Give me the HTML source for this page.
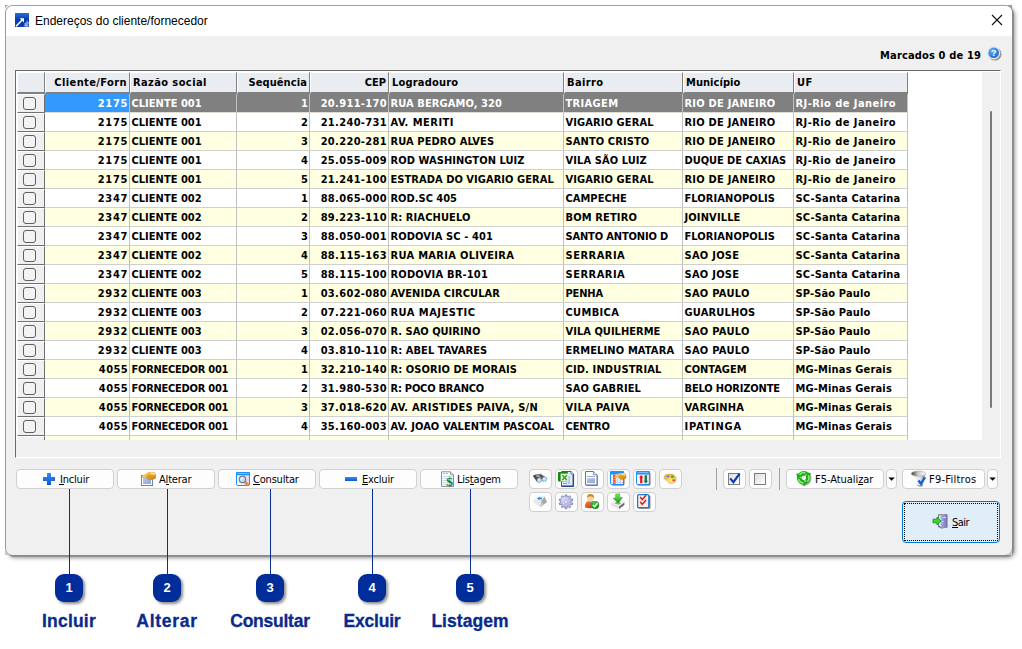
<!DOCTYPE html>
<html lang="pt-BR">
<head>
<meta charset="utf-8">
<title>Endereços do cliente/fornecedor</title>
<style>
html,body{margin:0;padding:0;background:#fff;}
body{width:1022px;height:649px;position:relative;overflow:hidden;font-family:"Liberation Sans",sans-serif;font-size:11px;color:#000;}
div,span,i,b,u{box-sizing:border-box;}
svg{position:absolute;overflow:visible;}
#win{position:absolute;left:5px;top:5px;width:1007px;height:550px;background:#f0f0f0;border-radius:8px 7px 7px 7px;border-left:1px solid #9c9c9c;border-top:1px solid #98a2b4;box-shadow:1px 1px 0 #8a8a8a,2px 2px 1px #8c8c8c,3px 3px 4px rgba(0,0,0,.38);overflow:hidden;}
.ear{position:absolute;width:7px;height:7px;background:#b9c2d0;}
#tbar{position:absolute;left:0;top:0;width:1008px;height:30px;background:#fff;}
#hfill{position:absolute;left:908px;top:72px;width:74px;height:22px;background:#fff;}
#ttl{position:absolute;left:35px;top:14px;font-size:12px;line-height:14px;white-space:nowrap;color:#000;}
#marc{font-family:"DejaVu Sans Condensed","DejaVu Sans","Liberation Sans",sans-serif;position:absolute;right:41px;top:49px;letter-spacing:.15px;font-size:11px;font-weight:bold;line-height:14px;white-space:nowrap;}
/* grid */
#grid{position:absolute;left:15px;top:70px;width:986px;height:388px;background:#f0f0f0;border-top:1px solid #696969;border-left:1px solid #696969;border-right:1px solid #fff;border-bottom:1px solid #fff;}
#gin{position:absolute;left:16px;top:71px;width:984px;height:386px;border-top:1px solid #fff;border-left:1px solid #fff;}
#data{position:absolute;left:17px;top:94px;width:965px;height:346px;background:#fff;overflow:hidden;}
#hind{position:absolute;left:17px;top:72px;width:28px;height:22px;background:#e9edf1;border-top:1px solid #fff;border-left:1px solid #fff;border-right:1px solid #808080;border-bottom:2px solid #808080;}
.hc{font-family:"DejaVu Sans Condensed","DejaVu Sans","Liberation Sans",sans-serif;position:absolute;top:72px;height:22px;background:#e9edf1;border-top:1px solid #fff;border-left:1px solid #fff;border-right:1px solid #808080;border-bottom:2px solid #808080;font-weight:bold;font-size:11px;line-height:18px;white-space:nowrap;overflow:hidden;padding:1px 2px 0 2px;z-index:2;}
.r{text-align:right;}
.l{text-align:left;}
.row{position:absolute;left:0;width:891px;height:19px;}
.row .c{font-family:"DejaVu Sans Condensed","DejaVu Sans","Liberation Sans",sans-serif;position:absolute;top:0;height:19px;font-weight:bold;font-size:11px;line-height:17px;white-space:nowrap;overflow:hidden;padding:1px 1px 0 1px;border-bottom:1px solid #d0d0d0;border-right:1px solid #c0c0c0;}
.row .c.l{padding-left:1.5px;}
.row.yl .c{background:#ffffe1;}
.row.wh .c{background:#fff;}
.row.sel .c{background:#808080;color:#fff;border-bottom-color:#e0dcd4;}
.row.sel .c.first{background:#3399ff;}
.ind{position:absolute;left:17px;width:28px;height:19px;background:#f0f0f0;border-top:1px solid #fff;border-left:1px solid #fff;border-right:1px solid #707070;border-bottom:1px solid #707070;}
.ind i{position:absolute;left:5px;top:2px;width:13px;height:13px;border:1px solid #5f5f5f;border-radius:3px;background:#f3f3f3;}
#indmask{position:absolute;left:16px;top:440px;width:966px;height:17px;background:#f0f0f0;}
#vsb{position:absolute;left:982px;top:72px;width:18px;height:368px;background:#f0f0f0;}
#thumb{position:absolute;left:990px;top:111px;width:2px;height:297px;background:#7a7a7a;border-radius:1px;}
/* buttons */
.btn{position:absolute;top:469px;height:20px;background:#fdfdfd;border:1px solid #d0d0d0;border-radius:4px;font-size:11px;line-height:20px;white-space:nowrap;}
.btn span{position:absolute;top:0;}
u{text-decoration:none;border-bottom:1px solid #000;display:inline-block;line-height:8px;}
.sep{position:absolute;top:468px;width:1px;height:22px;background:#a0a0a0;}

#sair{position:absolute;left:902px;top:501px;width:98px;height:42px;background:#e0eef9;border:1px solid #0078d7;border-radius:4px;font-family:"DejaVu Sans Condensed","DejaVu Sans","Liberation Sans",sans-serif;font-size:11px;}
#focus{position:absolute;left:1px;top:1px;right:1px;bottom:1px;border:1px dotted #000;}
.btn{font-family:"DejaVu Sans Condensed","DejaVu Sans","Liberation Sans",sans-serif;letter-spacing:-.2px;}
.ln{position:absolute;top:489px;width:1px;height:86px;background:#0a2e96;}
.bdg{position:absolute;top:574px;width:28px;height:28px;border-radius:9px;background:#002d9a;color:#fff;font-weight:bold;font-size:13px;line-height:28px;text-align:center;box-shadow:2px 2px 3px rgba(0,0,0,.45);}
.lbl{-webkit-text-stroke:.3px #0a2a8c;position:absolute;top:610px;width:100px;text-align:center;font-weight:bold;font-size:17.5px;line-height:22px;color:#0a2a8c;white-space:nowrap;}
</style>
</head>
<body>

<div id="win">
<div id="tbar"></div>
</div>
<div class="ear" style="left:1005px;top:5px;background:radial-gradient(circle at 0 100%,rgba(0,0,0,0) 6.6px,#8f9cb4 7.4px)"></div>
<div class="ear" style="left:1005px;top:548px;background:radial-gradient(circle at 0 0,rgba(0,0,0,0) 6.6px,#c2cad6 7.4px)"></div>
<div class="ear" style="left:5px;top:548px;background:radial-gradient(circle at 100% 0,rgba(0,0,0,0) 6.6px,#c2c6cc 7.4px)"></div>
<div class="ear" style="left:5px;top:5px;width:5px;height:5px;background:radial-gradient(circle at 100% 100%,rgba(0,0,0,0) 4.6px,#a2a6ae 5.4px)"></div>
<div id="ttl">Endereços do cliente/fornecedor</div>
<div id="marc">Marcados 0 de 19</div>
<div id="grid"></div>
<div id="gin"></div>
<div id="vsb"></div>
<div id="hfill"></div>
<div id="thumb"></div>
<div id="hind"></div>
<div class="hc r" style="left:45px;width:85px;letter-spacing:0.4px">Cliente/Forn</div>
<div class="hc l" style="left:130px;width:107px;letter-spacing:0.4px">Razão social</div>
<div class="hc r" style="left:237px;width:73px;letter-spacing:0.1px">Sequência</div>
<div class="hc r" style="left:310px;width:79px;letter-spacing:0px">CEP</div>
<div class="hc l" style="left:389px;width:175px;letter-spacing:0.2px">Logradouro</div>
<div class="hc l" style="left:564px;width:119px;letter-spacing:0.4px">Bairro</div>
<div class="hc l" style="left:683px;width:111px;letter-spacing:0.05px">Município</div>
<div class="hc l" style="left:794px;width:114px;letter-spacing:0.4px">UF</div>
<div id="data">
<div class="row sel" style="top:0px">
<div class="c r first" style="left:28px;width:85px;letter-spacing:0.66px">2175</div>
<div class="c l" style="left:113px;width:107px;letter-spacing:0.02px">CLIENTE 001</div>
<div class="c r" style="left:220px;width:73px">1</div>
<div class="c r" style="left:293px;width:79px;letter-spacing:0.34px">20.911-170</div>
<div class="c l" style="left:372px;width:175px;letter-spacing:0.09px">RUA BERGAMO, 320</div>
<div class="c l" style="left:547px;width:119px;letter-spacing:0.35px">TRIAGEM</div>
<div class="c l" style="left:666px;width:111px;letter-spacing:0.23px">RIO DE JANEIRO</div>
<div class="c l" style="left:777px;width:114px;letter-spacing:0.44px">RJ-Rio de Janeiro</div>
</div>
<div class="row wh" style="top:19px">
<div class="c r" style="left:28px;width:85px;letter-spacing:0.66px">2175</div>
<div class="c l" style="left:113px;width:107px;letter-spacing:0.02px">CLIENTE 001</div>
<div class="c r" style="left:220px;width:73px">2</div>
<div class="c r" style="left:293px;width:79px;letter-spacing:0.34px">21.240-731</div>
<div class="c l" style="left:372px;width:175px;letter-spacing:0.48px">AV. MERITI</div>
<div class="c l" style="left:547px;width:119px;letter-spacing:0.1px">VIGARIO GERAL</div>
<div class="c l" style="left:666px;width:111px;letter-spacing:0.23px">RIO DE JANEIRO</div>
<div class="c l" style="left:777px;width:114px;letter-spacing:0.44px">RJ-Rio de Janeiro</div>
</div>
<div class="row yl" style="top:38px">
<div class="c r" style="left:28px;width:85px;letter-spacing:0.66px">2175</div>
<div class="c l" style="left:113px;width:107px;letter-spacing:0.02px">CLIENTE 001</div>
<div class="c r" style="left:220px;width:73px">3</div>
<div class="c r" style="left:293px;width:79px;letter-spacing:0.34px">20.220-281</div>
<div class="c l" style="left:372px;width:175px;letter-spacing:0.1px">RUA PEDRO ALVES</div>
<div class="c l" style="left:547px;width:119px;letter-spacing:0.11px">SANTO CRISTO</div>
<div class="c l" style="left:666px;width:111px;letter-spacing:0.23px">RIO DE JANEIRO</div>
<div class="c l" style="left:777px;width:114px;letter-spacing:0.44px">RJ-Rio de Janeiro</div>
</div>
<div class="row wh" style="top:57px">
<div class="c r" style="left:28px;width:85px;letter-spacing:0.66px">2175</div>
<div class="c l" style="left:113px;width:107px;letter-spacing:0.02px">CLIENTE 001</div>
<div class="c r" style="left:220px;width:73px">4</div>
<div class="c r" style="left:293px;width:79px;letter-spacing:0.34px">25.055-009</div>
<div class="c l" style="left:372px;width:175px;letter-spacing:0.07px">ROD WASHINGTON LUIZ</div>
<div class="c l" style="left:547px;width:119px;letter-spacing:0.09px">VILA SÃO LUIZ</div>
<div class="c l" style="left:666px;width:111px;letter-spacing:-0.05px">DUQUE DE CAXIAS</div>
<div class="c l" style="left:777px;width:114px;letter-spacing:0.44px">RJ-Rio de Janeiro</div>
</div>
<div class="row yl" style="top:76px">
<div class="c r" style="left:28px;width:85px;letter-spacing:0.66px">2175</div>
<div class="c l" style="left:113px;width:107px;letter-spacing:0.02px">CLIENTE 001</div>
<div class="c r" style="left:220px;width:73px">5</div>
<div class="c r" style="left:293px;width:79px;letter-spacing:0.34px">21.241-100</div>
<div class="c l" style="left:372px;width:175px;letter-spacing:0.05px">ESTRADA DO VIGARIO GERAL</div>
<div class="c l" style="left:547px;width:119px;letter-spacing:0.1px">VIGARIO GERAL</div>
<div class="c l" style="left:666px;width:111px;letter-spacing:0.23px">RIO DE JANEIRO</div>
<div class="c l" style="left:777px;width:114px;letter-spacing:0.44px">RJ-Rio de Janeiro</div>
</div>
<div class="row wh" style="top:95px">
<div class="c r" style="left:28px;width:85px;letter-spacing:0.66px">2347</div>
<div class="c l" style="left:113px;width:107px;letter-spacing:0.02px">CLIENTE 002</div>
<div class="c r" style="left:220px;width:73px">1</div>
<div class="c r" style="left:293px;width:79px;letter-spacing:0.34px">88.065-000</div>
<div class="c l" style="left:372px;width:175px">ROD.SC 405</div>
<div class="c l" style="left:547px;width:119px;letter-spacing:0.03px">CAMPECHE</div>
<div class="c l" style="left:666px;width:111px;letter-spacing:0.08px">FLORIANOPOLIS</div>
<div class="c l" style="left:777px;width:114px;letter-spacing:0.18px">SC-Santa Catarina</div>
</div>
<div class="row yl" style="top:114px">
<div class="c r" style="left:28px;width:85px;letter-spacing:0.66px">2347</div>
<div class="c l" style="left:113px;width:107px;letter-spacing:0.02px">CLIENTE 002</div>
<div class="c r" style="left:220px;width:73px">2</div>
<div class="c r" style="left:293px;width:79px;letter-spacing:0.34px">89.223-110</div>
<div class="c l" style="left:372px;width:175px;letter-spacing:0.11px">R: RIACHUELO</div>
<div class="c l" style="left:547px;width:119px;letter-spacing:0.14px">BOM RETIRO</div>
<div class="c l" style="left:666px;width:111px;letter-spacing:0.14px">JOINVILLE</div>
<div class="c l" style="left:777px;width:114px;letter-spacing:0.18px">SC-Santa Catarina</div>
</div>
<div class="row wh" style="top:133px">
<div class="c r" style="left:28px;width:85px;letter-spacing:0.66px">2347</div>
<div class="c l" style="left:113px;width:107px;letter-spacing:0.02px">CLIENTE 002</div>
<div class="c r" style="left:220px;width:73px">3</div>
<div class="c r" style="left:293px;width:79px;letter-spacing:0.34px">88.050-001</div>
<div class="c l" style="left:372px;width:175px;letter-spacing:0.1px">RODOVIA SC - 401</div>
<div class="c l" style="left:547px;width:119px;letter-spacing:-0.15px">SANTO ANTONIO D</div>
<div class="c l" style="left:666px;width:111px;letter-spacing:0.08px">FLORIANOPOLIS</div>
<div class="c l" style="left:777px;width:114px;letter-spacing:0.18px">SC-Santa Catarina</div>
</div>
<div class="row yl" style="top:152px">
<div class="c r" style="left:28px;width:85px;letter-spacing:0.66px">2347</div>
<div class="c l" style="left:113px;width:107px;letter-spacing:0.02px">CLIENTE 002</div>
<div class="c r" style="left:220px;width:73px">4</div>
<div class="c r" style="left:293px;width:79px;letter-spacing:0.34px">88.115-163</div>
<div class="c l" style="left:372px;width:175px;letter-spacing:0.31px">RUA MARIA OLIVEIRA</div>
<div class="c l" style="left:547px;width:119px;letter-spacing:0.5px">SERRARIA</div>
<div class="c l" style="left:666px;width:111px;letter-spacing:0.27px">SAO JOSE</div>
<div class="c l" style="left:777px;width:114px;letter-spacing:0.18px">SC-Santa Catarina</div>
</div>
<div class="row wh" style="top:171px">
<div class="c r" style="left:28px;width:85px;letter-spacing:0.66px">2347</div>
<div class="c l" style="left:113px;width:107px;letter-spacing:0.02px">CLIENTE 002</div>
<div class="c r" style="left:220px;width:73px">5</div>
<div class="c r" style="left:293px;width:79px;letter-spacing:0.34px">88.115-100</div>
<div class="c l" style="left:372px;width:175px;letter-spacing:0.2px">RODOVIA BR-101</div>
<div class="c l" style="left:547px;width:119px;letter-spacing:0.5px">SERRARIA</div>
<div class="c l" style="left:666px;width:111px;letter-spacing:0.27px">SAO JOSE</div>
<div class="c l" style="left:777px;width:114px;letter-spacing:0.18px">SC-Santa Catarina</div>
</div>
<div class="row yl" style="top:190px">
<div class="c r" style="left:28px;width:85px;letter-spacing:0.66px">2932</div>
<div class="c l" style="left:113px;width:107px;letter-spacing:0.02px">CLIENTE 003</div>
<div class="c r" style="left:220px;width:73px">1</div>
<div class="c r" style="left:293px;width:79px;letter-spacing:0.34px">03.602-080</div>
<div class="c l" style="left:372px;width:175px;letter-spacing:0.09px">AVENIDA CIRCULAR</div>
<div class="c l" style="left:547px;width:119px;letter-spacing:-0.17px">PENHA</div>
<div class="c l" style="left:666px;width:111px;letter-spacing:0.28px">SAO PAULO</div>
<div class="c l" style="left:777px;width:114px;letter-spacing:0.14px">SP-São Paulo</div>
</div>
<div class="row wh" style="top:209px">
<div class="c r" style="left:28px;width:85px;letter-spacing:0.66px">2932</div>
<div class="c l" style="left:113px;width:107px;letter-spacing:0.02px">CLIENTE 003</div>
<div class="c r" style="left:220px;width:73px">2</div>
<div class="c r" style="left:293px;width:79px;letter-spacing:0.34px">07.221-060</div>
<div class="c l" style="left:372px;width:175px;letter-spacing:0.48px">RUA MAJESTIC</div>
<div class="c l" style="left:547px;width:119px;letter-spacing:0.35px">CUMBICA</div>
<div class="c l" style="left:666px;width:111px;letter-spacing:0.18px">GUARULHOS</div>
<div class="c l" style="left:777px;width:114px;letter-spacing:0.14px">SP-São Paulo</div>
</div>
<div class="row yl" style="top:228px">
<div class="c r" style="left:28px;width:85px;letter-spacing:0.66px">2932</div>
<div class="c l" style="left:113px;width:107px;letter-spacing:0.02px">CLIENTE 003</div>
<div class="c r" style="left:220px;width:73px">3</div>
<div class="c r" style="left:293px;width:79px;letter-spacing:0.34px">02.056-070</div>
<div class="c l" style="left:372px;width:175px">R. SAO QUIRINO</div>
<div class="c l" style="left:547px;width:119px;letter-spacing:0.03px">VILA QUILHERME</div>
<div class="c l" style="left:666px;width:111px;letter-spacing:0.28px">SAO PAULO</div>
<div class="c l" style="left:777px;width:114px;letter-spacing:0.14px">SP-São Paulo</div>
</div>
<div class="row wh" style="top:247px">
<div class="c r" style="left:28px;width:85px;letter-spacing:0.66px">2932</div>
<div class="c l" style="left:113px;width:107px;letter-spacing:0.02px">CLIENTE 003</div>
<div class="c r" style="left:220px;width:73px">4</div>
<div class="c r" style="left:293px;width:79px;letter-spacing:0.34px">03.810-110</div>
<div class="c l" style="left:372px;width:175px;letter-spacing:0.08px">R: ABEL TAVARES</div>
<div class="c l" style="left:547px;width:119px;letter-spacing:0.14px">ERMELINO MATARA</div>
<div class="c l" style="left:666px;width:111px;letter-spacing:0.28px">SAO PAULO</div>
<div class="c l" style="left:777px;width:114px;letter-spacing:0.14px">SP-São Paulo</div>
</div>
<div class="row yl" style="top:266px">
<div class="c r" style="left:28px;width:85px;letter-spacing:0.4px">4055</div>
<div class="c l" style="left:113px;width:107px;letter-spacing:-0.25px">FORNECEDOR 001</div>
<div class="c r" style="left:220px;width:73px">1</div>
<div class="c r" style="left:293px;width:79px;letter-spacing:0.34px">32.210-140</div>
<div class="c l" style="left:372px;width:175px;letter-spacing:0.08px">R: OSORIO DE MORAIS</div>
<div class="c l" style="left:547px;width:119px;letter-spacing:0.15px">CID. INDUSTRIAL</div>
<div class="c l" style="left:666px;width:111px;letter-spacing:-0.03px">CONTAGEM</div>
<div class="c l" style="left:777px;width:114px;letter-spacing:0.16px">MG-Minas Gerais</div>
</div>
<div class="row wh" style="top:285px">
<div class="c r" style="left:28px;width:85px;letter-spacing:0.4px">4055</div>
<div class="c l" style="left:113px;width:107px;letter-spacing:-0.25px">FORNECEDOR 001</div>
<div class="c r" style="left:220px;width:73px">2</div>
<div class="c r" style="left:293px;width:79px;letter-spacing:0.34px">31.980-530</div>
<div class="c l" style="left:372px;width:175px;letter-spacing:-0.22px">R: POCO BRANCO</div>
<div class="c l" style="left:547px;width:119px;letter-spacing:0.1px">SAO GABRIEL</div>
<div class="c l" style="left:666px;width:111px;letter-spacing:-0.15px">BELO HORIZONTE</div>
<div class="c l" style="left:777px;width:114px;letter-spacing:0.16px">MG-Minas Gerais</div>
</div>
<div class="row yl" style="top:304px">
<div class="c r" style="left:28px;width:85px;letter-spacing:0.4px">4055</div>
<div class="c l" style="left:113px;width:107px;letter-spacing:-0.25px">FORNECEDOR 001</div>
<div class="c r" style="left:220px;width:73px">3</div>
<div class="c r" style="left:293px;width:79px;letter-spacing:0.34px">37.018-620</div>
<div class="c l" style="left:372px;width:175px;letter-spacing:0.27px">AV. ARISTIDES PAIVA, S/N</div>
<div class="c l" style="left:547px;width:119px;letter-spacing:0.35px">VILA PAIVA</div>
<div class="c l" style="left:666px;width:111px;letter-spacing:0.17px">VARGINHA</div>
<div class="c l" style="left:777px;width:114px;letter-spacing:0.16px">MG-Minas Gerais</div>
</div>
<div class="row wh" style="top:323px">
<div class="c r" style="left:28px;width:85px;letter-spacing:0.4px">4055</div>
<div class="c l" style="left:113px;width:107px;letter-spacing:-0.25px">FORNECEDOR 001</div>
<div class="c r" style="left:220px;width:73px">4</div>
<div class="c r" style="left:293px;width:79px;letter-spacing:0.34px">35.160-003</div>
<div class="c l" style="left:372px;width:175px;letter-spacing:0.08px">AV. JOAO VALENTIM PASCOAL</div>
<div class="c l" style="left:547px;width:119px;letter-spacing:-0.12px">CENTRO</div>
<div class="c l" style="left:666px;width:111px;letter-spacing:0.78px">IPATINGA</div>
<div class="c l" style="left:777px;width:114px;letter-spacing:0.16px">MG-Minas Gerais</div>
</div>
<div class="row yl" style="top:342px">
<div class="c" style="left:28px;width:85px"></div>
<div class="c" style="left:113px;width:107px"></div>
<div class="c" style="left:220px;width:73px"></div>
<div class="c" style="left:293px;width:79px"></div>
<div class="c" style="left:372px;width:175px"></div>
<div class="c" style="left:547px;width:119px"></div>
<div class="c" style="left:666px;width:111px"></div>
<div class="c" style="left:777px;width:114px"></div>
</div>
</div>
<div class="ind" style="top:94px"><i></i></div>
<div class="ind" style="top:113px"><i></i></div>
<div class="ind" style="top:132px"><i></i></div>
<div class="ind" style="top:151px"><i></i></div>
<div class="ind" style="top:170px"><i></i></div>
<div class="ind" style="top:189px"><i></i></div>
<div class="ind" style="top:208px"><i></i></div>
<div class="ind" style="top:227px"><i></i></div>
<div class="ind" style="top:246px"><i></i></div>
<div class="ind" style="top:265px"><i></i></div>
<div class="ind" style="top:284px"><i></i></div>
<div class="ind" style="top:303px"><i></i></div>
<div class="ind" style="top:322px"><i></i></div>
<div class="ind" style="top:341px"><i></i></div>
<div class="ind" style="top:360px"><i></i></div>
<div class="ind" style="top:379px"><i></i></div>
<div class="ind" style="top:398px"><i></i></div>
<div class="ind" style="top:417px"><i></i></div>
<div class="ind" style="top:436px"></div>
<div id="indmask"></div>
<!-- title icon -->
<svg id="ticon" style="left:15px;top:13px" width="14" height="14" viewBox="0 0 14 14">
<defs><linearGradient id="tg" x1="0" y1="0" x2="0" y2="1"><stop offset="0" stop-color="#2a6ad8"/><stop offset=".3" stop-color="#1450c0"/><stop offset=".45" stop-color="#0a3aa8"/><stop offset="1" stop-color="#0a3cb0"/></linearGradient></defs>
<rect width="14" height="14" fill="url(#tg)"/>
<path d="M1 13.2 L7.2 7" stroke="#fff" stroke-width="1.6" fill="none"/>
<path d="M4.6 5.2 H9 V9.6 Z" fill="#fff"/>
<path d="M8.6 13.6 L12.4 6.8 L13.8 13.8 Z" fill="#9ab8ec" opacity=".7"/><path d="M9.6 10.2 h1.2 v1.2 h-1.2 Z M12.6 9 h1 v1.4 h-1 Z M10.6 12 h1.6 v1.2 h-1.6 Z" fill="#dfe9fb" opacity=".9"/>
</svg>
<!-- close X -->
<svg style="left:991px;top:14px" width="12" height="12" viewBox="0 0 12 12"><path d="M1 1 L11 11 M11 1 L1 11" stroke="#111" stroke-width="1.1" fill="none"/></svg>
<!-- help icon -->
<svg style="left:986px;top:45px" width="16" height="16" viewBox="0 0 16 16">
<defs><radialGradient id="hg" cx=".35" cy=".3" r=".85"><stop offset="0" stop-color="#6cb0f6"/><stop offset=".55" stop-color="#2f84e4"/><stop offset="1" stop-color="#1a62c4"/></radialGradient></defs>
<circle cx="8.9" cy="9" r="6.6" fill="#4a4a4a" opacity=".55"/>
<circle cx="7.7" cy="7.8" r="6.6" fill="#e6e2de"/>
<circle cx="7.7" cy="7.8" r="5.3" fill="url(#hg)"/>
<text x="7.7" y="11" text-anchor="middle" font-family="Liberation Sans, sans-serif" font-weight="bold" font-size="9" fill="#fff">?</text>
</svg>

<!-- main buttons -->
<div class="btn" style="left:16px;width:98px"><span style="left:43px"><u style="padding:0 1px;margin:0 -1px">I</u>ncluir</span></div>
<div class="btn" style="left:117px;width:98px"><span style="left:41px">A<u style="padding-right:1px;margin-right:-1px">l</u>terar</span></div>
<div class="btn" style="left:218px;width:98px"><span style="left:34px"><u>C</u>onsultar</span></div>
<div class="btn" style="left:319px;width:98px"><span style="left:42px"><u>E</u>xcluir</span></div>
<div class="btn" style="left:420px;width:98px"><span style="left:36px">Lis<u>t</u>agem</span></div>
<!-- small buttons row 1 -->
<div class="btn" style="left:529px;width:23px"></div>
<div class="btn" style="left:555px;width:23px"></div>
<div class="btn" style="left:581px;width:23px"></div>
<div class="btn" style="left:607px;width:23px"></div>
<div class="btn" style="left:633px;width:23px"></div>
<div class="btn" style="left:659px;width:23px"></div>
<!-- small buttons row 2 -->
<div class="btn" style="left:529px;width:23px;top:492px"></div>
<div class="btn" style="left:555px;width:23px;top:492px"></div>
<div class="btn" style="left:581px;width:23px;top:492px"></div>
<div class="btn" style="left:607px;width:23px;top:492px"></div>
<div class="btn" style="left:633px;width:23px;top:492px"></div>
<div class="sep" style="left:716px"></div>
<div class="btn" style="left:723px;width:23px"></div>
<div class="btn" style="left:749px;width:23px"></div>
<div class="sep" style="left:779px"></div>
<div class="btn" style="left:786px;width:98px"><span style="left:28px;letter-spacing:-.05px">F5-Atuali<u>z</u>ar</span></div>
<div class="btn" style="left:886px;width:11px"></div>
<div class="btn" style="left:902px;width:83px"><span style="left:26px;letter-spacing:.25px">F9-Filtros</span></div>
<div class="btn" style="left:987px;width:11px"></div>
<div id="sair"><div id="focus"></div><span style="position:absolute;left:49px;top:14px;line-height:14px;letter-spacing:-.5px"><u>S</u>air</span></div>

<svg id="ico" style="left:0;top:0" width="1022" height="649" viewBox="0 0 1022 649">
<defs>
<linearGradient id="gold" x1="0" y1="0" x2="1" y2="1"><stop offset="0" stop-color="#fbe08a"/><stop offset=".45" stop-color="#eeb030"/><stop offset="1" stop-color="#b87810"/></linearGradient>
<linearGradient id="bluefill" x1="0" y1="0" x2="1" y2="1"><stop offset="0" stop-color="#b8c6ea"/><stop offset="1" stop-color="#93a6d8"/></linearGradient>
<linearGradient id="lav" x1="0" y1="0" x2="1" y2="0"><stop offset="0" stop-color="#ffffff"/><stop offset="1" stop-color="#ded6fb"/></linearGradient>
<radialGradient id="lens" cx=".35" cy=".35" r=".8"><stop offset="0" stop-color="#e6f6ff"/><stop offset="1" stop-color="#86ccf8"/></radialGradient>
<linearGradient id="grn" x1="0" y1="0" x2="0" y2="1"><stop offset="0" stop-color="#7cf060"/><stop offset="1" stop-color="#109a10"/></linearGradient>
<linearGradient id="plus" x1="0" y1="0" x2="0" y2="1"><stop offset="0" stop-color="#3a8af8"/><stop offset="1" stop-color="#0e56d0"/></linearGradient>
<linearGradient id="fun" x1="0" y1="0" x2="1" y2="0"><stop offset="0" stop-color="#3c3c3c"/><stop offset=".45" stop-color="#c8c8c8"/><stop offset="1" stop-color="#ffffff"/></linearGradient>
<linearGradient id="fun2" x1="0" y1="0" x2="1" y2="0"><stop offset="0" stop-color="#ffffff"/><stop offset=".6" stop-color="#e4e4e4"/><stop offset="1" stop-color="#8c8c8c"/></linearGradient>
<linearGradient id="door" x1="0" y1="0" x2="1" y2="0"><stop offset="0" stop-color="#a8a8e6"/><stop offset="1" stop-color="#7474b8"/></linearGradient>
<radialGradient id="pal" cx=".6" cy=".7" r=".8"><stop offset="0" stop-color="#fbf070"/><stop offset="1" stop-color="#eaa848"/></radialGradient>
<linearGradient id="usr" x1="0" y1="0" x2="1" y2="1"><stop offset="0" stop-color="#f08a30"/><stop offset="1" stop-color="#c42a18"/></linearGradient>
<radialGradient id="chk" cx=".4" cy=".3" r=".8"><stop offset="0" stop-color="#48d048"/><stop offset="1" stop-color="#0c8010"/></radialGradient>
<linearGradient id="keyt" x1="0" y1="0" x2="1" y2="1"><stop offset="0" stop-color="#ffffff"/><stop offset="1" stop-color="#e8e8e8"/></linearGradient>
<linearGradient id="cb" x1="0" y1="0" x2="1" y2="1"><stop offset="0" stop-color="#dcdcdc"/><stop offset="1" stop-color="#ffffff"/></linearGradient>
<g id="hand">
<path d="M1.1 5.7 L6 1.7 Q7.2 .8 9 .9 L12.4 1 Q14.8 1.5 15 4 L14.9 6.8 Q14.2 8.7 12 8.3 L9.8 9.2 Q7.8 9.6 6.8 8 L5.4 6.2 L4.2 5.6 L2.4 7.2 Q.9 7.2 1.1 5.7 Z" fill="url(#gold)"/>
<path d="M9.6 1.7 Q12.4 1.3 13.6 2.6 L13.7 4.4 Q11.6 3 9.4 3.1 Z" fill="#fff8d4" opacity=".8"/>
<path d="M5.4 6.2 L6.8 8 M6.6 5 L8.4 7.4 M7.8 4 L9.8 6.4" stroke="#a86c0c" stroke-width=".7" fill="none" opacity=".75"/>
<path d="M1.1 5.7 L6 1.7" stroke="#fbe6a0" stroke-width=".6" fill="none"/>
</g>
</defs>
<!-- Incluir: plus -->
<path d="M47 473 h4 v4 h4 v4 h-4 v4 h-4 v-4 h-4 v-4 h4 Z" fill="url(#plus)"/>
<!-- Alterar: window + hand -->
<rect x="141.5" y="475.5" width="11" height="10" fill="#fff" stroke="#6d82b6"/>
<rect x="143" y="477" width="8" height="7" fill="url(#bluefill)"/>
<use href="#hand" x="141" y="471"/>
<!-- Consultar -->
<rect x="236.5" y="472.5" width="13" height="13" rx="1.2" fill="url(#lav)" stroke="#1e90ff"/>
<rect x="236" y="472" width="14" height="3.2" rx="1" fill="#1e90ff"/>
<rect x="237.5" y="473.2" width="11" height=".8" fill="#8cc8ff"/>
<path d="M245 482 L248.6 485.4" stroke="#f07820" stroke-width="2.6"/>
<path d="M245.6 482.4 L248.4 485.2" stroke="#ffd040" stroke-width=".9" stroke-dasharray="1 1"/>
<circle cx="242.5" cy="479.4" r="3.2" fill="url(#lens)" stroke="#7c7c7c" stroke-width="1.2"/>
<!-- Excluir: minus -->
<rect x="345" y="477" width="12" height="4" fill="url(#plus)"/>
<!-- Listagem: notepad with $ -->
<path d="M441.5 471.8 H450.5 L453.5 474.8 V486.5 H441.5 Z" fill="#fff" stroke="#8c8c8c"/>
<path d="M450.5 471.8 V474.8 H453.5" fill="#e8e8e8" stroke="#8c8c8c" stroke-width=".8"/>
<path d="M443 473.2 l1 .9 1-.9 M446 473.2 l1 .9 1-.9" stroke="#9a9a9a" stroke-width=".8" fill="none"/>
<path d="M442.5 476.5 H452.5 M442.5 478.5 H452.5 M442.5 480.5 H452.5 M442.5 482.5 H452.5 M442.5 484.5 H452.5" stroke="#c4d6ea" stroke-width="1"/>
<text x="449.5" y="486" text-anchor="middle" font-family="Liberation Serif, serif" font-weight="bold" font-size="13.5" fill="#0e8410">$</text>

<!-- binoculars (btn 529) -->
<g>
<path d="M532.8 475.8 L535.4 474.6 L541.6 479 L538.4 482.6 L536.6 481.6 Z" fill="#4c4c4c"/>
<path d="M537.4 474.4 L540.4 473.8 L546.8 478 L543.6 481.4 L541.8 480.2 Z" fill="#585858"/>
<path d="M535.4 474.6 L540.4 473.8 L542.2 475 L537.2 476 Z" fill="#808080"/>
<path d="M536.2 476.6 L538.4 476.2 L540.6 477.8" stroke="#c8c8c8" stroke-width=".7" fill="none"/>
<circle cx="539.3" cy="480.3" r="2.3" fill="url(#lens)" stroke="#94a4b4" stroke-width=".6"/>
<circle cx="544.6" cy="479.2" r="2.3" fill="url(#lens)" stroke="#94a4b4" stroke-width=".6"/>
</g>
<!-- excel (btn 555) -->
<g>
<path d="M561.5 471.5 H571 L573.6 474 V486.5 H561.5 Z" fill="#dfe9fb" stroke="#3c5a94"/>
<path d="M571 471.5 V474 H573.6" fill="#fff" stroke="#3c5a94" stroke-width=".8"/>
<path d="M573.2 474.5 V486.2 H562" stroke="#24407a" stroke-width="1.2" fill="none"/>
<path d="M563 483.5 H567 M569 476 V484" stroke="#7ea0dc" stroke-width="1"/>
<rect x="558" y="472" width="10" height="9.4" rx="1" fill="#0c8a0c"/>
<rect x="560.6" y="473.6" width="7.8" height="7.8" fill="#dcf2cc"/>
<path d="M562.4 475.2 L566.8 480 M566.8 475.2 L562.4 480" stroke="#3c9432" stroke-width="1.3"/>
</g>
<!-- page (btn 581) -->
<g>
<path d="M586.2 472.2 H594 L597.8 475.6 V486 H586.2 Z" fill="#4c5c84" opacity=".75"/>
<path d="M585.5 471.5 H593.4 L597 474.8 V485 H585.5 Z" fill="#fff" stroke="#6474a6"/>
<path d="M593.4 471.5 V474.8 H597" fill="#eef2fc" stroke="#6474a6" stroke-width=".8"/>
<path d="M587 476.5 H595" stroke="#9cacda" stroke-width="1"/>
<rect x="587" y="478.2" width="8" height="5" fill="url(#bluefill)"/>
</g>
<!-- table + hand (btn 607) -->
<g>
<rect x="611.4" y="472.4" width="13" height="13" rx="1.4" fill="#4a3420" opacity=".85"/>
<rect x="610.5" y="471.5" width="13" height="13" rx="1.4" fill="#fff" stroke="#1e90ff"/>
<rect x="610" y="471" width="14" height="3.4" rx="1" fill="#1e90ff"/>
<path d="M611 477.5 H623 M611 480 H623 M611 482.5 H623 M617.5 475 V484 M620.5 475 V484" stroke="#d2c8f6" stroke-width="1"/>
<rect x="613" y="474.6" width="2.6" height="9.4" fill="#f2501e"/>
<path d="M613 477.3 h2.6 M613 479.8 h2.6 M613 482.3 h2.6" stroke="#ffb070" stroke-width=".7"/>
<use href="#hand" transform="translate(614 472.2) scale(.82)"/>
</g>
<!-- sort arrows (btn 633) -->
<g>
<rect x="637.4" y="472.4" width="13" height="13" rx="1.4" fill="#4a3420" opacity=".85"/>
<rect x="636.5" y="471.5" width="13" height="13" rx="1.4" fill="url(#lav)" stroke="#1e90ff"/>
<rect x="636" y="471" width="14" height="3.4" rx="1" fill="#1e90ff"/>
<rect x="637.5" y="472.2" width="11" height=".8" fill="#8cc8ff"/>
<path d="M639 477.6 L641.2 475 L643.4 477.6 H642.3 V483.2 H640.1 V477.6 Z" fill="#f01010"/>
<path d="M643.6 480.8 L645.8 483.4 L648 480.8 H646.9 V475.2 H644.7 V480.8 Z" fill="#0c7c14"/>
</g>
<!-- palette (btn 659) -->
<g>
<path d="M664 477.6 Q664.2 474.4 669 474.1 Q675.6 473.8 676.2 478.8 Q676.4 483 671.6 483.6 Q668.6 483.8 668 481.6 Q667.6 480.2 665.6 480 Q664 479.6 664 477.6 Z" fill="url(#pal)" stroke="#d8a050" stroke-width=".5"/>
<ellipse cx="668" cy="476.5" rx="1.5" ry="1.1" fill="#4a8ae8"/>
<ellipse cx="672.3" cy="476.7" rx="1.4" ry="1.2" fill="#2cb02c"/>
<ellipse cx="673.7" cy="480.3" rx="1.5" ry="1.1" fill="#e84848"/>
</g>
<!-- key (btn 529 row2) -->
<g>
<path d="M533 502 L534.6 499.2 L537.4 496.2 L544.6 496.5 L547 502.2 L540.2 506.9 Z" fill="#f2f2f2"/>
<path d="M544.6 496.5 L547 502.2 L540.2 506.9 L541 500.8 Z" fill="#a8a8a8"/>
<path d="M541 500.8 L540.2 506.9 L543.6 504.6 Z" fill="#c4c4c4"/>
<path d="M533 502 L534.6 499.4 L541 500.8 L540.2 506.9 Z" fill="#e9e9e9"/>
<path d="M537.4 496.2 L544.6 496.5 L541 500.8 L534.6 499.4 Z" fill="#ffffff" stroke="#e4e4e4" stroke-width=".4"/>
<path d="M536.8 498.4 L539.8 496.8 L539.8 497.7 L542.6 497.2 L541.4 499.6 L539.6 499.2 L539.4 500.2 Z" fill="#1e8cf4"/>
</g>
<!-- gear (btn 555 row2) -->
<g transform="translate(566 501.8)">
<path d="M-0.83 -6.95 L0.83 -6.95 L1.05 -4.99 L2.08 -4.65 L3.41 -6.11 L4.76 -5.13 L3.78 -3.42 L4.42 -2.54 L6.35 -2.94 L6.87 -1.35 L5.07 -0.54 L5.07 0.54 L6.87 1.35 L6.35 2.94 L4.42 2.54 L3.78 3.42 L4.76 5.13 L3.41 6.11 L2.08 4.65 L1.05 4.99 L0.83 6.95 L-0.83 6.95 L-1.05 4.99 L-2.08 4.65 L-3.41 6.11 L-4.76 5.13 L-3.78 3.42 L-4.42 2.54 L-6.35 2.94 L-6.87 1.35 L-5.07 0.54 L-5.07 -0.54 L-6.87 -1.35 L-6.35 -2.94 L-4.42 -2.54 L-3.78 -3.42 L-4.76 -5.13 L-3.41 -6.11 L-2.08 -4.65 L-1.05 -4.99 Z" fill="#bcbce4" stroke="#7878b6" stroke-width=".8" stroke-linejoin="round"/>
<circle cx="-1.2" cy="-1.4" r="3.6" fill="#d6d6f2" opacity=".85"/>
<circle r="1.5" fill="#fff" stroke="#8c8cc6" stroke-width=".6"/>
</g>
<!-- user + check (btn 581 row2) -->
<g>
<path d="M585 507.6 Q584.6 502 588.4 501 L590.4 502.4 L592.6 501 Q596.4 502 596.2 507.6 Q590.6 509 585 507.6 Z" fill="url(#usr)"/>
<path d="M589.2 501.4 L590.4 503.6 L591.8 501.4 Z" fill="#6a86c4"/>
<circle cx="590.4" cy="498" r="3.3" fill="#ffcf96"/>
<path d="M587 498 Q586.6 494 590.4 494 Q594.4 494 593.8 498.2 Q592.6 495.8 590.2 496.2 Q588 496 587 498 Z" fill="#c48a1c"/>
<circle cx="595.2" cy="505" r="4" fill="url(#chk)"/>
<path d="M593 505 L594.6 506.8 L597.6 503.2" stroke="#fff" stroke-width="1.4" fill="none"/>
</g>
<!-- download tray (btn 607 row2) -->
<g>
<path d="M611 503.2 L616 500 L624.4 502.4 L619 506.4 Z" fill="#f6f6f6" stroke="#cfcfcf" stroke-width=".5"/>
<path d="M611 503.2 L619 506.4 V509 L611 505.6 Z" fill="#e2e2e2"/>
<path d="M619 506.4 L624.4 502.4 V505 L619 509 Z" fill="#6c6c6c"/>
<path d="M614.4 503.4 L616.8 501.6 L621.4 503 L618.8 504.8 Z" fill="#9a9a9a"/>
<path d="M615.6 494.2 L619.6 493.8 L619.8 497.6 L622.4 497.4 L618.4 503.2 L613 498.2 L615.8 498 Z" fill="url(#grn)" stroke="#18a018" stroke-width=".5"/>
</g>
<!-- checklist (btn 633 row2) -->
<g>
<rect x="638.4" y="495.4" width="12" height="13.4" rx="1.2" fill="#5a3a24" opacity=".7"/>
<rect x="637.6" y="494.6" width="11.2" height="13" rx="1.2" fill="#f6efe8" stroke="#1e78d8" stroke-width="1.3"/>
<rect x="640.4" y="498.4" width="3.6" height="2.4" fill="#fff" stroke="#c8c8c8" stroke-width=".4"/>
<rect x="640.4" y="503.2" width="3.6" height="2.4" fill="#fff" stroke="#c8c8c8" stroke-width=".4"/>
<path d="M640.2 496.8 L642.2 499.6 L646 495.2" stroke="#d41414" stroke-width="1.4" fill="none"/>
<path d="M640.2 501.6 L642.2 504.4 L646 500" stroke="#d41414" stroke-width="1.4" fill="none"/>
</g>
<!-- checkbox buttons -->
<rect x="728.5" y="473.5" width="11" height="11" fill="url(#cb)" stroke="#7c7c7c"/>
<path d="M730.2 478.4 L733.4 482.2 L739.6 473.6" stroke="#0c3ab4" stroke-width="2.2" fill="none"/>
<rect x="754.5" y="473.5" width="11" height="11" fill="url(#cb)" stroke="#7c7c7c"/>
<!-- recycle (F5) -->
<g transform="translate(803.8 477.8)">
<circle cx=".9" cy="1" r="5" fill="none" stroke="#6c5c6c" stroke-width="4" opacity=".38"/>
<g id="rarr">
<path d="M-4.3 -1.3 A4.5 4.5 0 0 1 2.1 -4" stroke="#1cac1c" stroke-width="4.6" fill="none"/>
<path d="M-7.4 -4.6 L-2 -2.6 L-6.4 1.6 Z" fill="#1cac1c"/>
<path d="M-4.2 -2.6 A4.8 4.8 0 0 1 1.6 -4.9" stroke="#8af46a" stroke-width="1.5" fill="none"/>
</g>
<use href="#rarr" transform="rotate(120)"/>
<use href="#rarr" transform="rotate(240)"/>
<circle r="1.2" fill="#e8e8e8"/>
</g>
<!-- dropdown arrows -->
<path d="M888.4 477.6 h6.4 l-3.2 3.2 Z" fill="#000"/>
<path d="M989.4 477.6 h6.4 l-3.2 3.2 Z" fill="#000"/>
<!-- funnel (F9) -->
<g>
<path d="M911.4 474 L917.4 481 V485.4 Q920 487 923 485.6 V480.6 L925.6 474 Z" fill="url(#fun2)"/>
<path d="M917.4 485.4 Q920 487 923 485.6" stroke="#6c6c6c" stroke-width=".8" fill="none"/>
<ellipse cx="918.5" cy="473.7" rx="7.2" ry="2.6" fill="url(#fun)" stroke="#9a9a9a" stroke-width=".5"/>
<path d="M918.4 480.6 L921 483.8 L925 477.2" stroke="#1060e0" stroke-width="2.4" fill="none"/>
</g>
<!-- door (Sair) -->
<g>
<path d="M938 514.2 H947.6 V527.6 L941.4 528.4 L938 527 Z" fill="#7e7e7e"/>
<path d="M939 515.2 H941.6 V526.8 L939 526 Z" fill="#bfe2f6"/>
<path d="M941.4 515 L946.8 514.6 V527.4 L941.4 528.4 Z" fill="url(#door)"/>
<path d="M943.2 517.4 h2.6" stroke="#fff" stroke-width="1" opacity=".9"/>
<path d="M942 521.6 h1.6" stroke="#d8d8f4" stroke-width="1"/>
<path d="M933 519.2 H937 V517 L941 521 L937 525 V522.8 H933 Z" fill="#48d038" stroke="#0c9a0c" stroke-width=".9"/>
</g>
</svg>

<!-- annotations -->
<div class="ln" style="left:69px"></div>
<div class="ln" style="left:167px"></div>
<div class="ln" style="left:270px"></div>
<div class="ln" style="left:372px"></div>
<div class="ln" style="left:470px"></div>
<div class="bdg" style="left:55px">1</div>
<div class="bdg" style="left:153px">2</div>
<div class="bdg" style="left:256px">3</div>
<div class="bdg" style="left:358px">4</div>
<div class="bdg" style="left:456px">5</div>
<div class="lbl" style="left:19px;letter-spacing:.2px">Incluir</div>
<div class="lbl" style="left:117px;letter-spacing:.7px">Alterar</div>
<div class="lbl" style="left:220px;letter-spacing:-.25px">Consultar</div>
<div class="lbl" style="left:322px;letter-spacing:-.2px">Excluir</div>
<div class="lbl" style="left:420px;letter-spacing:.05px">Listagem</div>
</body>
</html>
